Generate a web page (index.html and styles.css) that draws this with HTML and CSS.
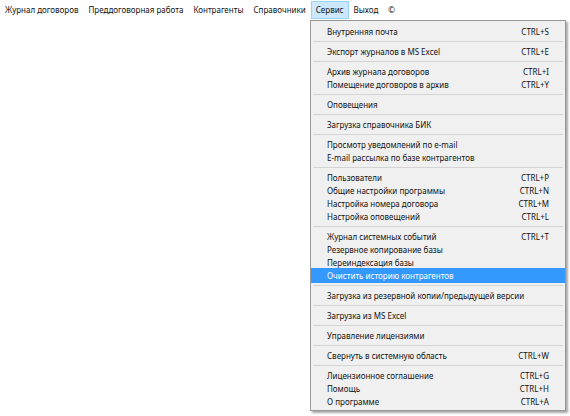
FILE: index.html
```html
<!DOCTYPE html>
<html lang="ru">
<head>
<meta charset="utf-8">
<link rel="stylesheet" href="styles.css">
</head>
<body>
<nav class="menubar">
  <span class="mb-item">Журнал договоров</span>
  <span class="mb-item">Преддоговорная работа</span>
  <span class="mb-item">Контрагенты</span>
  <span class="mb-item">Справочники</span>
  <span class="mb-item active">Сервис</span>
  <span class="mb-item">Выход</span>
  <span class="mb-item">©</span>
</nav>
<div class="dropdown">
  <div class="row"><span>Внутренняя почта</span><span>CTRL+S</span></div>
  <div class="sep"></div>
  <div class="row"><span>Экспорт журналов в MS Excel</span><span>CTRL+E</span></div>
  <div class="sep"></div>
  <div class="row"><span>Архив журнала договоров</span><span>CTRL+I</span></div>
  <div class="row"><span>Помещение договоров в архив</span><span>CTRL+Y</span></div>
  <div class="sep"></div>
  <div class="row"><span>Оповещения</span></div>
  <div class="sep"></div>
  <div class="row"><span>Загрузка справочника БИК</span></div>
  <div class="sep"></div>
  <div class="row"><span>Просмотр уведомлений по e-mail</span></div>
  <div class="row"><span>E-mail рассылка по базе контрагентов</span></div>
  <div class="sep"></div>
  <div class="row"><span>Пользователи</span><span>CTRL+P</span></div>
  <div class="row"><span>Общие настройки программы</span><span>CTRL+N</span></div>
  <div class="row"><span>Настройка номера договора</span><span>CTRL+M</span></div>
  <div class="row"><span>Настройка оповещений</span><span>CTRL+L</span></div>
  <div class="sep"></div>
  <div class="row"><span>Журнал системных событий</span><span>CTRL+T</span></div>
  <div class="row"><span>Резервное копирование базы</span></div>
  <div class="row"><span>Переиндексация базы</span></div>
  <div class="row hl"><span>Очистить историю контрагентов</span></div>
  <div class="sep"></div>
  <div class="row"><span>Загрузка из резервной копии/предыдущей версии</span></div>
  <div class="sep"></div>
  <div class="row"><span>Загрузка из MS Excel</span></div>
  <div class="sep"></div>
  <div class="row"><span>Управление лицензиями</span></div>
  <div class="sep"></div>
  <div class="row"><span>Свернуть в системную область</span><span>CTRL+W</span></div>
  <div class="sep"></div>
  <div class="row"><span>Лицензионное соглашение</span><span>CTRL+G</span></div>
  <div class="row"><span>Помощь</span><span>CTRL+H</span></div>
  <div class="row"><span>О программе</span><span>CTRL+A</span></div>
</div>
</body>
</html>
```
FILE: styles.css
```css
* { box-sizing: border-box; }
html, body {
  margin: 0;
  padding: 0;
  background: #ffffff;
  width: 570px;
  height: 416px;
  overflow: hidden;
  font-family: "Noto Sans", "DejaVu Sans", sans-serif;
  color: #111111;
}
body { position: relative; }
.menubar {
  display: flex;
  height: 20px;
  align-items: center;
  padding-left: 0;
  font-size: 8px;
}
.mb-item {
  padding: 0 4px;
  height: 18px;
  line-height: 16px;
  border: 1px solid transparent;
  white-space: nowrap;
}
.mb-item.active {
  background: #cce8ff;
  border-color: #99d1ff;
}
.dropdown {
  position: absolute;
  left: 310px;
  top: 20px;
  width: 256px;
  background: #f0f0f0;
  border: 1px solid #979797;
  box-shadow: 2px 2px 2px rgba(0,0,0,0.35);
  padding: 4px 0 2px;
  font-size: 8px;
}
.row {
  display: flex;
  justify-content: space-between;
  height: 13px;
  line-height: 13px;
  padding: 0 16px 0 16px;
  white-space: nowrap;
}
.row.hl {
  background: #3399ff;
  color: #ffffff;
  margin-top: -1px;
  height: 15px;
  line-height: 15px;
  margin-bottom: -1px;
}
.sep {
  height: 1px;
  margin: 3px 2px;
  background: #d4d4d4;
}
```
